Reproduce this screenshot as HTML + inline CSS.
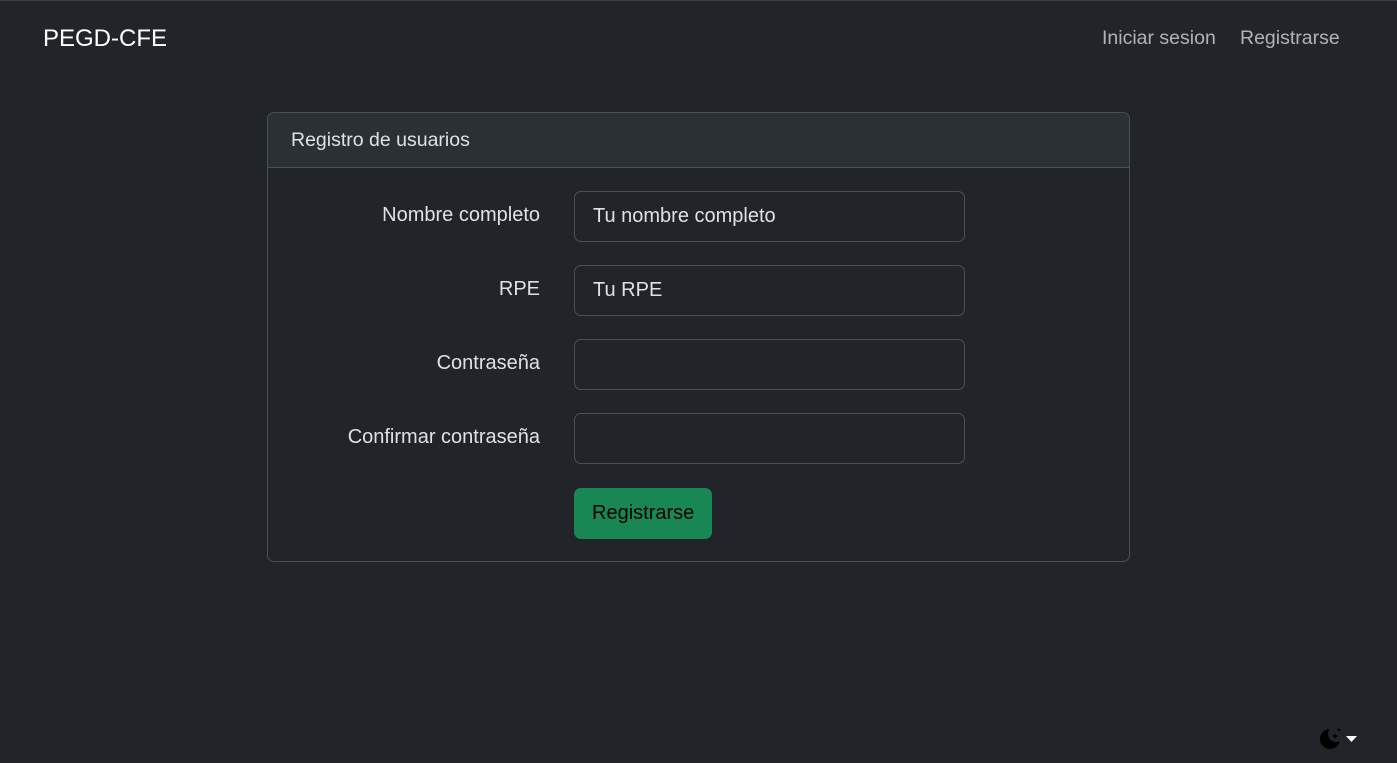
<!DOCTYPE html>
<html><head><style>
*{box-sizing:border-box;margin:0;padding:0}
body{width:1397px;height:763px;background:#212529;color:#dee2e6;font-family:"Liberation Sans",sans-serif;position:relative;overflow:hidden}
.topline{position:absolute;left:0;top:0;width:100%;height:1px;background:#3a3f44}
.brand{position:absolute;left:43px;top:25px;font-size:24px;color:#fff}
.nav{position:absolute;top:27px;font-size:19.5px;color:rgba(222,226,230,.75)}
.card{position:absolute;left:267px;top:112px;width:863px;height:450px;border:1px solid #495057;border-radius:7px;overflow:hidden}
.hd{height:55px;background:#2b3035;border-bottom:1px solid #495057;padding:16px 23px;font-size:19.5px}
.row{position:absolute;left:0;width:100%}
.lbl{position:absolute;right:589px;top:13px;font-size:20px;white-space:nowrap}
.inp{position:absolute;left:306px;top:0;width:391px;height:51px;border:1px solid #495057;border-radius:7px;background:#212529;padding:13px 18px;font-size:20px;color:#dee2e6}
.btn{position:absolute;left:306px;width:138px;height:51px;background:#198754;border-radius:7px;color:#000;font-size:20px;padding:14px 18px}
</style></head><body>
<div class="topline"></div>
<div class="brand">PEGD-CFE</div>
<div class="nav" style="left:1102px">Iniciar sesion</div>
<div class="nav" style="left:1240px">Registrarse</div>
<div class="card">
<div class="hd">Registro de usuarios</div>
<div class="row" style="top:78px"><div class="lbl">Nombre completo</div><div class="inp">Tu nombre completo</div></div>
<div class="row" style="top:152px"><div class="lbl">RPE</div><div class="inp">Tu RPE</div></div>
<div class="row" style="top:226px"><div class="lbl">Contraseña</div><div class="inp"></div></div>
<div class="row" style="top:300px"><div class="lbl">Confirmar contraseña</div><div class="inp"></div></div>
<div class="btn" style="top:375px">Registrarse</div>
</div>
<svg style="position:absolute;left:1319px;top:727px" width="42" height="24" viewBox="0 0 42 24">
<defs><mask id="m"><rect width="42" height="24" fill="#fff"/><circle cx="17" cy="7" r="8" fill="#000"/></mask></defs>
<circle cx="11" cy="12" r="10" fill="#000" mask="url(#m)"/>
<path d="M16 6 l1 2 2 1 -2 1 -1 2 -1 -2 -2 -1 2 -1z M20 1 l.7 1.3 1.3.7 -1.3.7 -.7 1.3 -.7 -1.3 -1.3 -.7 1.3 -.7z" fill="#000"/>
<path d="M27 9 h11 l-5.5 6z" fill="#fff"/>
</svg>
</body></html>
